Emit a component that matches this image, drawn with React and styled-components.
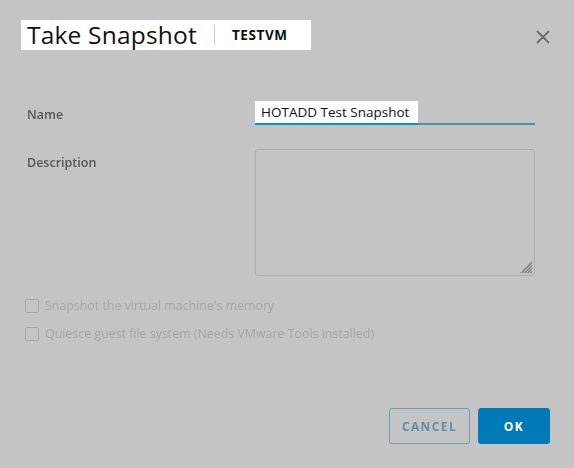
import React from "react";
import styled, { createGlobalStyle } from "styled-components";

const Global = createGlobalStyle`
  html, body { margin: 0; padding: 0; background: #c4c4c4; }
  body { font-family: "Open Sans", "Noto Sans", sans-serif; }
  * { box-sizing: border-box; }
`;

const Dialog = styled.div`
  width: 574px;
  height: 468px;
  background: #c4c4c4;
  display: flex;
  flex-direction: column;
  padding: 20px 24px 0 0;
`;

const Header = styled.div`
  display: flex;
  align-items: flex-start;
  justify-content: space-between;
`;

const TitleBox = styled.div`
  margin-left: 21px;
  background: #fff;
  height: 30px;
  width: 290px;
  display: flex;
  align-items: center;
  padding-left: 6px;
`;

const Title = styled.h1`
  margin: 0;
  font-family: "Open Sans", sans-serif;
  font-weight: 400;
  font-size: 24.5px;
  letter-spacing: 0.2px;
  color: #111;
  line-height: 30px;
`;

const Sep = styled.span`
  width: 1px;
  height: 20px;
  background: #c9c9c9;
  margin: 0 17px 0 17px;
`;

const VmName = styled.span`
  font-family: "Open Sans", sans-serif;
  font-weight: 700;
  font-size: 13.5px;
  letter-spacing: 0.6px;
  color: #111;
`;

const Close = styled.button`
  background: none;
  border: none;
  padding: 0;
  margin-top: 10px;
  width: 14px;
  height: 14px;
  display: flex;
`;

const Form = styled.div`
  display: grid;
  grid-template-columns: 228px 280px;
  padding-left: 27px;
  margin-top: 51px;
  row-gap: 24px;
`;

const Label = styled.div`
  font-family: "Open Sans", sans-serif;
  font-size: 12.5px;
  font-weight: 600;
  color: #565656;
  filter: blur(0.5px);
  padding-top: ${(p) => p.$top}px;
`;

const InputLine = styled.div`
  height: 24px;
  border-bottom: 2px solid #4e8fad;
  display: flex;
`;

const Highlight = styled.div`
  background: #fff;
  height: 24px;
  margin-bottom: -2px;
  border-bottom: 2px solid #0095d3;
  padding: 0 9px 0 6px;
  font-family: "Open Sans", sans-serif;
  font-size: 13.5px;
  color: #111;
  line-height: 22px;
`;

const TextArea = styled.div`
  position: relative;
  height: 127px;
  border: 1px solid #aeaeae;
  border-radius: 3px;
  filter: blur(0.4px);
`;

const Grip = styled.svg`
  position: absolute;
  right: 2px;
  bottom: 2px;
`;

const Checks = styled.div`
  display: flex;
  flex-direction: column;
  gap: 13px;
  padding-left: 25px;
  margin-top: 22px;
  filter: blur(0.6px);
`;

const CheckRow = styled.label`
  display: flex;
  align-items: center;
  gap: 6px;
  font-family: "Open Sans", sans-serif;
  font-size: 12.4px;
  color: #a6a6a6;
  height: 15px;
`;

const Box = styled.span`
  width: 14px;
  height: 14px;
  border: 1px solid #a9a9a9;
  border-radius: 2px;
`;

const Footer = styled.div`
  display: flex;
  justify-content: flex-end;
  gap: 8px;
  margin-top: auto;
  margin-bottom: 24px;
`;

const Btn = styled.button`
  height: 36px;
  width: ${(p) => p.$w}px;
  border-radius: 3px;
  font-family: "Open Sans", sans-serif;
  font-weight: 700;
  font-size: 12px;
  letter-spacing: 1.4px;
  text-transform: uppercase;
  border: 1.5px solid ${(p) => (p.$primary ? "#0079b8" : "#6b9db8")};
  background: ${(p) => (p.$primary ? "#0079b8" : "transparent")};
  color: ${(p) => (p.$primary ? "#fff" : "#5b8fac")};
  filter: ${(p) => (p.$primary ? "none" : "blur(0.5px)")};
`;

export default function App() {
  return (
    <>
      <Global />
      <Dialog>
        <Header>
          <TitleBox>
            <Title>Take Snapshot</Title>
            <Sep />
            <VmName>TESTVM</VmName>
          </TitleBox>
          <Close aria-label="close">
            <svg width="14" height="14" viewBox="0 0 14 14" style={{ filter: "blur(0.5px)" }}>
              <path d="M1 1L13 13M13 1L1 13" stroke="#6e6e6e" strokeWidth="1.8" />
            </svg>
          </Close>
        </Header>
        <Form>
          <Label $top={5}>Name</Label>
          <InputLine>
            <Highlight>HOTADD Test Snapshot</Highlight>
          </InputLine>
          <Label $top={5}>Description</Label>
          <TextArea>
            <Grip width="12" height="12" viewBox="0 0 12 12">
              <path d="M12 0L0 12H12Z" fill="#8a8a8a" />
              <path d="M12 3L3 12M12 6L6 12M12 9L9 12" stroke="#b8b8b8" strokeWidth="1" />
            </Grip>
          </TextArea>
        </Form>
        <Checks>
          <CheckRow>
            <Box />
            Snapshot the virtual machine's memory
          </CheckRow>
          <CheckRow>
            <Box />
            Quiesce guest file system (Needs VMware Tools installed)
          </CheckRow>
        </Checks>
        <Footer>
          <Btn $w={81}>Cancel</Btn>
          <Btn $w={72} $primary>OK</Btn>
        </Footer>
      </Dialog>
    </>
  );
}
